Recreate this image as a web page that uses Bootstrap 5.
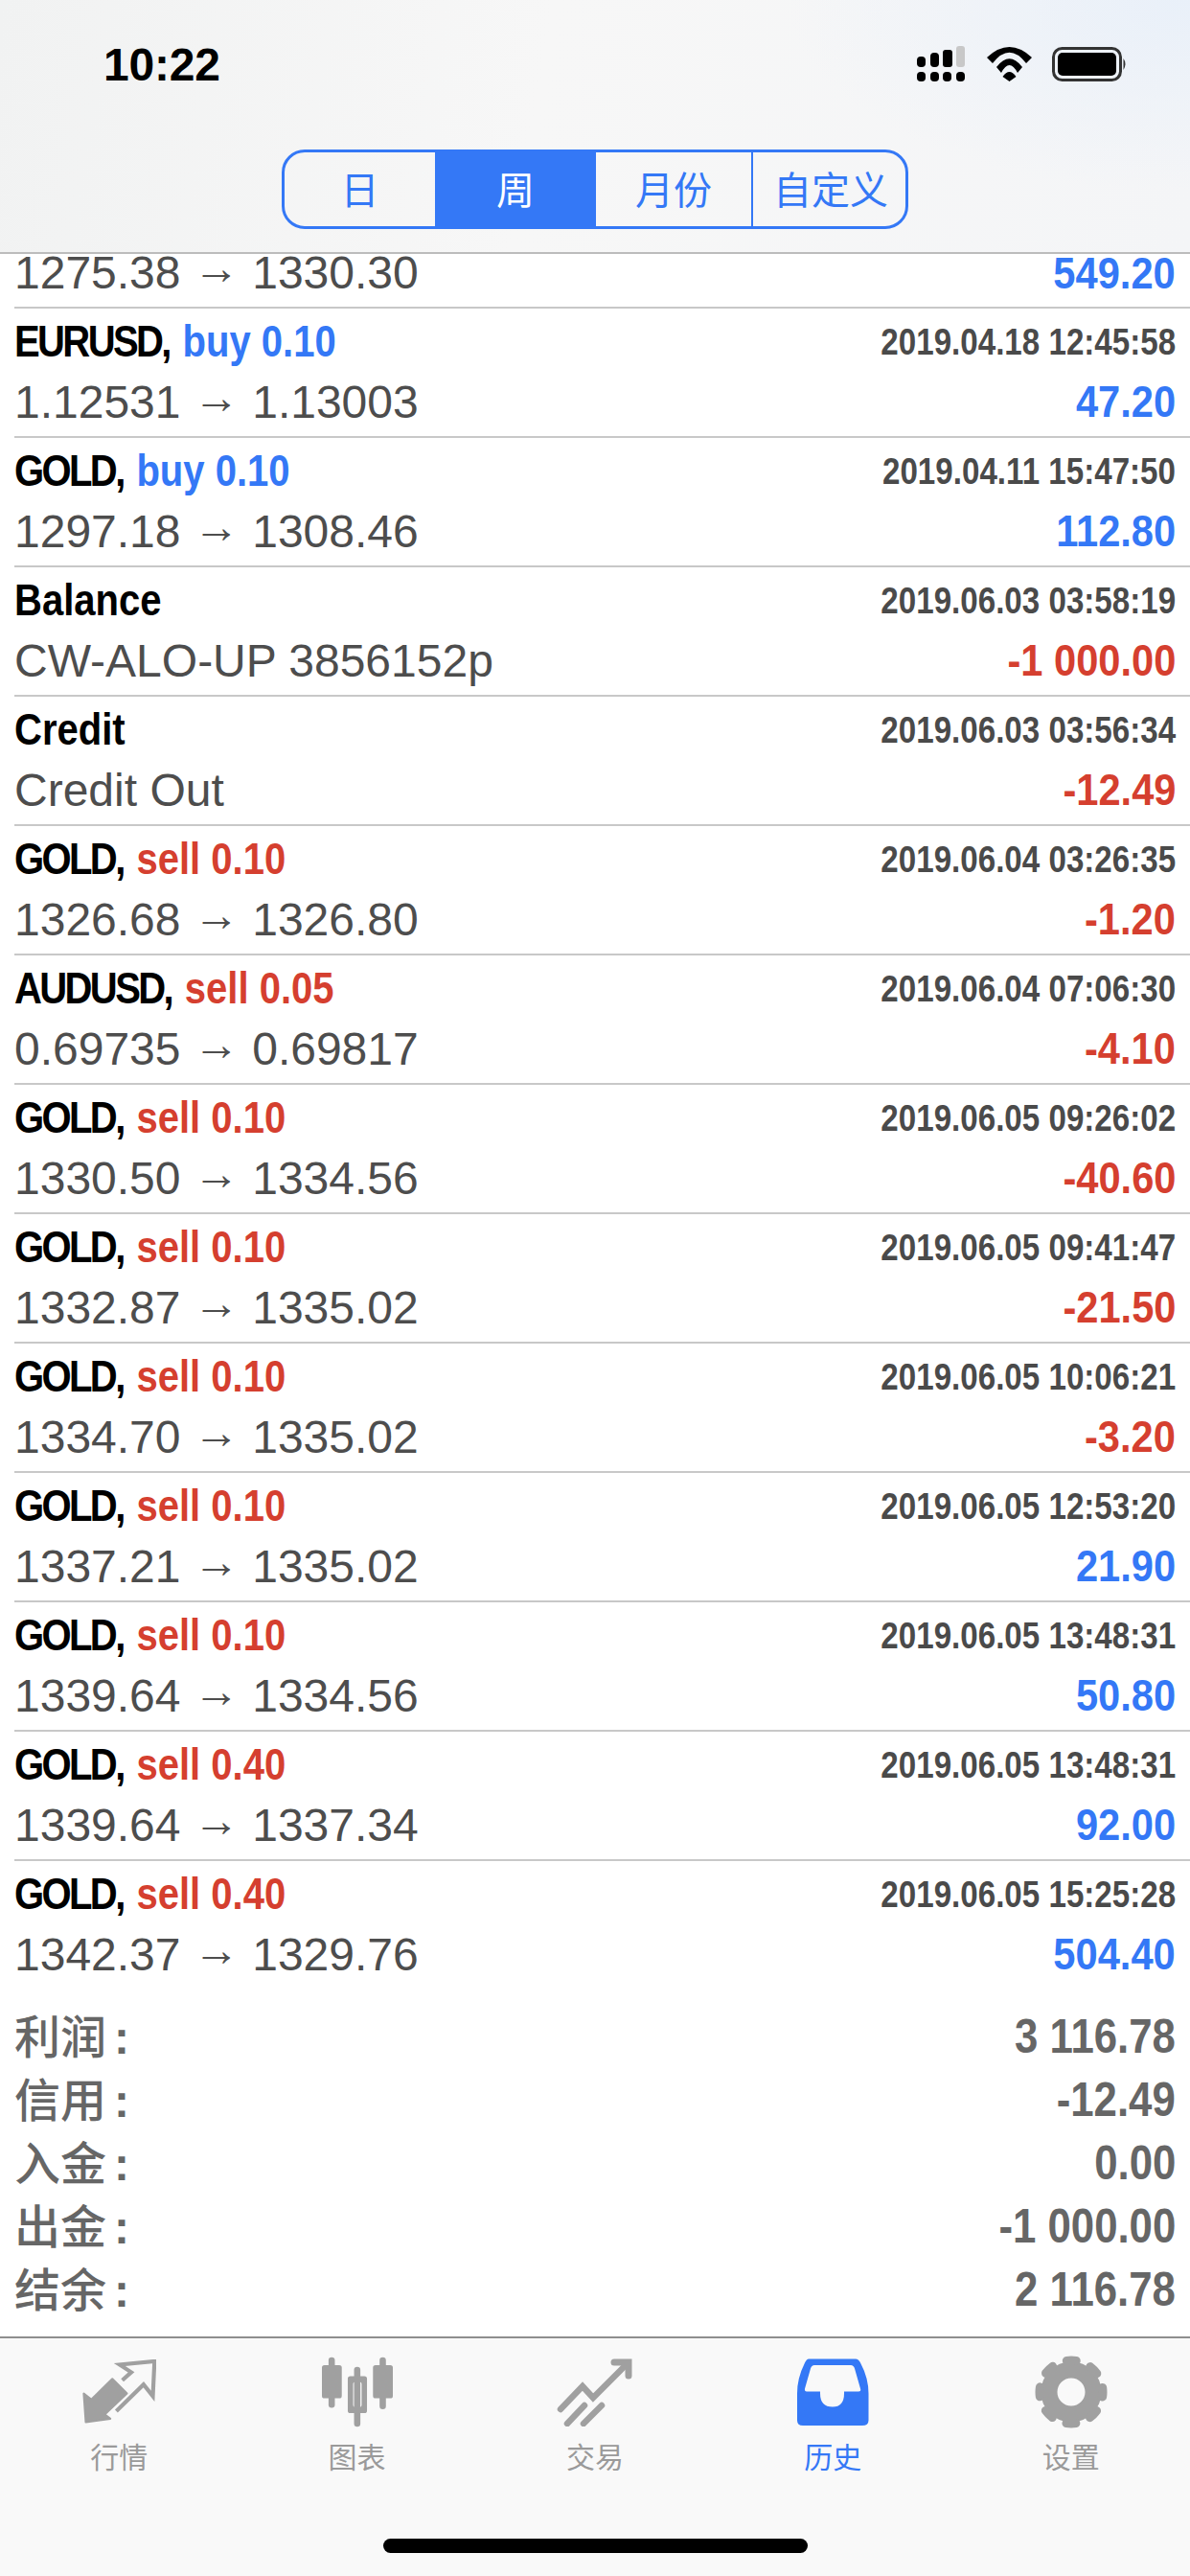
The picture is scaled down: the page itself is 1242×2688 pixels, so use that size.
<!DOCTYPE html>
<html lang="zh">
<head>
<meta charset="utf-8">
<title>历史</title>
<link href="https://cdn.jsdelivr.net/npm/bootstrap@5.3.0/dist/css/bootstrap.min.css" rel="stylesheet">
<style>
html,body{margin:0;background:#fff}
body{width:1242px;height:2688px;overflow:hidden;font-family:"Liberation Sans","Noto Sans CJK SC",sans-serif}
.phone{height:2688px}
.top-area{height:265px;border-bottom:2px solid #bcbcbc;background:radial-gradient(ellipse 420px 200px at 100% 0,#e9f0f9 0,rgba(233,240,249,0) 100%),linear-gradient(100deg,#f1f2f2 0,#f7f7f7 45%,#f4f5f7 100%)}
.status-line{height:156px;padding:44px 65px 0 108px}
.clock{font-size:48px;font-weight:700;line-height:48px;color:#000;letter-spacing:-.2px}
.seg{width:654px;height:83px;border:3px solid #3478f6;border-radius:24px;overflow:hidden}
.seg-item{font-size:40px;line-height:75px;color:#3478f6;text-align:center;font-family:"Noto Sans CJK SC",sans-serif}
.seg-item.on{background:#3478f6;color:#fff}
.seg-a{width:157px}.seg-b{width:168px}.seg-c{width:164px;border-right:2px solid #3478f6}.seg-d{flex:1;padding-left:3px}
.tx-list{flex:1}
.tx-list .list-group-item{margin-left:15px;padding:3px 15px 5px 0;border:0;border-bottom:2px solid #c8c8c8;height:135px;border-radius:0;background:transparent}
.tx-list .list-group-item.cut{height:57px;padding-top:0}
.tx-line{height:63px;line-height:63px;white-space:nowrap}
.cut .tx-line{height:40px;line-height:40px}
.ttl{display:inline-block;font-weight:700;font-size:46px;color:#000;transform:scaleX(.87);transform-origin:0 50%}
.sym{letter-spacing:-3px;margin-right:3px}
.stamp{display:inline-block;font-weight:700;font-size:39px;color:#4a4a4a;transform:scaleX(.85);transform-origin:100% 50%}
.px{font-size:48px;color:#4d4d4d}
.arw{vertical-align:5px;line-height:0}
.amt{display:inline-block;font-weight:700;font-size:46px;transform:scaleX(.905);transform-origin:100% 50%}
.up{color:#3478f6}.dn{color:#d53f2f}
.sum-box{padding:15px 15px 15px 15px;color:#666}
.sum-line{height:66px;line-height:66px}
.sum-key{font-size:48px;line-height:60px;font-weight:500;font-family:"Noto Sans CJK SC",sans-serif}
.sum-col{font-family:"Liberation Sans",sans-serif;font-weight:700;margin-left:8px}
.sum-val{display:inline-block;font-weight:700;font-size:50px;transform:scaleX(.875);transform-origin:100% 50%}
.tabs{height:250px;background:#f9f9f9;border-top:2px solid #8e8e8e;position:relative}
.tab-cell{width:20%;margin-top:18px;color:#9a9a9a;font-size:30px;line-height:36px;font-family:"Noto Sans CJK SC",sans-serif}
.tab-cell.on{color:#3478f6}
.tab-ico{height:76px;margin-bottom:10px;flex-shrink:0}
.tab-ico svg{display:block}
.home-bar{position:absolute;left:400px;top:209px;width:443px;height:15px;border-radius:8px;background:#000}
</style>
</head>
<body>
<div class="phone d-flex flex-column">
  <header class="top-area">
    <div class="status-line d-flex justify-content-between align-items-start">
      <div class="clock">10:22</div>
      <div class="d-flex align-items-start mt-1">
        <svg width="52" height="38" viewBox="0 0 52 38" style="margin-right:21px">
          <g fill="#000"><rect x="0" y="11" width="9" height="11" rx="4"/><rect x="14" y="7" width="9" height="15" rx="4"/><rect x="27" y="4" width="10" height="18" rx="3"/></g>
          <rect x="41" y="0" width="9" height="22" rx="3" fill="#c8c8c8"/>
          <g fill="#000"><rect x="0" y="27" width="9" height="10" rx="4"/><rect x="14" y="27" width="9" height="10" rx="4"/><rect x="27" y="27" width="9" height="10" rx="4"/><rect x="41" y="27" width="9" height="10" rx="4"/></g>
        </svg>
        <svg width="47" height="37" viewBox="0 0 47 37" style="margin:1px 21px 0 0">
          <path d="M0 11Q23.5-11 47 11L41 17Q23.5-5.500 6 17Z M10 21Q23.5 3.500 37 21L32 27Q23.500 11 15 27Z M16.500 31Q23.500 21 30.500 31L23.500 36Z" fill="#000"/>
        </svg>
        <svg width="79" height="37" viewBox="0 0 79 37" style="margin-top:1px">
          <rect x="1.500" y="1.500" width="70" height="33" rx="9" fill="none" stroke="#333" stroke-width="3"/>
          <rect x="6" y="6" width="61" height="24" rx="5" fill="#000"/>
          <path d="M74.500 12Q78.500 17.500 74.500 24Z" fill="#333"/>
        </svg>
      </div>
    </div>
    <div class="d-flex justify-content-center">
      <div class="seg d-flex" role="group">
        <div class="seg-item seg-a">日</div>
        <div class="seg-item seg-b on">周</div>
        <div class="seg-item seg-c">月份</div>
        <div class="seg-item seg-d">自定义</div>
      </div>
    </div>
  </header>

  <main class="tx-list">
    <ul class="list-group list-group-flush">
      <li class="list-group-item cut"><div class="tx-line d-flex justify-content-between"><span class="px">1275.38 <span class="arw">→</span> 1330.30</span><span class="amt up">549.20</span></div></li>
      <li class="list-group-item"><div class="tx-line d-flex justify-content-between"><span class="ttl"><span class="sym">EURUSD,</span> <span class="up">buy 0.10</span></span><span class="stamp">2019.04.18 12:45:58</span></div><div class="tx-line d-flex justify-content-between"><span class="px">1.12531 <span class="arw">→</span> 1.13003</span><span class="amt up">47.20</span></div></li>
      <li class="list-group-item"><div class="tx-line d-flex justify-content-between"><span class="ttl"><span class="sym">GOLD,</span> <span class="up">buy 0.10</span></span><span class="stamp">2019.04.11 15:47:50</span></div><div class="tx-line d-flex justify-content-between"><span class="px">1297.18 <span class="arw">→</span> 1308.46</span><span class="amt up">112.80</span></div></li>
      <li class="list-group-item"><div class="tx-line d-flex justify-content-between"><span class="ttl">Balance</span><span class="stamp">2019.06.03 03:58:19</span></div><div class="tx-line d-flex justify-content-between"><span class="px">CW-ALO-UP 3856152p</span><span class="amt dn">-1 000.00</span></div></li>
      <li class="list-group-item"><div class="tx-line d-flex justify-content-between"><span class="ttl">Credit</span><span class="stamp">2019.06.03 03:56:34</span></div><div class="tx-line d-flex justify-content-between"><span class="px">Credit Out</span><span class="amt dn">-12.49</span></div></li>
      <li class="list-group-item"><div class="tx-line d-flex justify-content-between"><span class="ttl"><span class="sym">GOLD,</span> <span class="dn">sell 0.10</span></span><span class="stamp">2019.06.04 03:26:35</span></div><div class="tx-line d-flex justify-content-between"><span class="px">1326.68 <span class="arw">→</span> 1326.80</span><span class="amt dn">-1.20</span></div></li>
      <li class="list-group-item"><div class="tx-line d-flex justify-content-between"><span class="ttl"><span class="sym">AUDUSD,</span> <span class="dn">sell 0.05</span></span><span class="stamp">2019.06.04 07:06:30</span></div><div class="tx-line d-flex justify-content-between"><span class="px">0.69735 <span class="arw">→</span> 0.69817</span><span class="amt dn">-4.10</span></div></li>
      <li class="list-group-item"><div class="tx-line d-flex justify-content-between"><span class="ttl"><span class="sym">GOLD,</span> <span class="dn">sell 0.10</span></span><span class="stamp">2019.06.05 09:26:02</span></div><div class="tx-line d-flex justify-content-between"><span class="px">1330.50 <span class="arw">→</span> 1334.56</span><span class="amt dn">-40.60</span></div></li>
      <li class="list-group-item"><div class="tx-line d-flex justify-content-between"><span class="ttl"><span class="sym">GOLD,</span> <span class="dn">sell 0.10</span></span><span class="stamp">2019.06.05 09:41:47</span></div><div class="tx-line d-flex justify-content-between"><span class="px">1332.87 <span class="arw">→</span> 1335.02</span><span class="amt dn">-21.50</span></div></li>
      <li class="list-group-item"><div class="tx-line d-flex justify-content-between"><span class="ttl"><span class="sym">GOLD,</span> <span class="dn">sell 0.10</span></span><span class="stamp">2019.06.05 10:06:21</span></div><div class="tx-line d-flex justify-content-between"><span class="px">1334.70 <span class="arw">→</span> 1335.02</span><span class="amt dn">-3.20</span></div></li>
      <li class="list-group-item"><div class="tx-line d-flex justify-content-between"><span class="ttl"><span class="sym">GOLD,</span> <span class="dn">sell 0.10</span></span><span class="stamp">2019.06.05 12:53:20</span></div><div class="tx-line d-flex justify-content-between"><span class="px">1337.21 <span class="arw">→</span> 1335.02</span><span class="amt up">21.90</span></div></li>
      <li class="list-group-item"><div class="tx-line d-flex justify-content-between"><span class="ttl"><span class="sym">GOLD,</span> <span class="dn">sell 0.10</span></span><span class="stamp">2019.06.05 13:48:31</span></div><div class="tx-line d-flex justify-content-between"><span class="px">1339.64 <span class="arw">→</span> 1334.56</span><span class="amt up">50.80</span></div></li>
      <li class="list-group-item"><div class="tx-line d-flex justify-content-between"><span class="ttl"><span class="sym">GOLD,</span> <span class="dn">sell 0.40</span></span><span class="stamp">2019.06.05 13:48:31</span></div><div class="tx-line d-flex justify-content-between"><span class="px">1339.64 <span class="arw">→</span> 1337.34</span><span class="amt up">92.00</span></div></li>
      <li class="list-group-item"><div class="tx-line d-flex justify-content-between"><span class="ttl"><span class="sym">GOLD,</span> <span class="dn">sell 0.40</span></span><span class="stamp">2019.06.05 15:25:28</span></div><div class="tx-line d-flex justify-content-between"><span class="px">1342.37 <span class="arw">→</span> 1329.76</span><span class="amt up">504.40</span></div></li>
    </ul>
    <section class="sum-box">
      <div class="sum-line d-flex justify-content-between"><span class="sum-key">利润<span class="sum-col">:</span></span><span class="sum-val">3 116.78</span></div>
      <div class="sum-line d-flex justify-content-between"><span class="sum-key">信用<span class="sum-col">:</span></span><span class="sum-val">-12.49</span></div>
      <div class="sum-line d-flex justify-content-between"><span class="sum-key">入金<span class="sum-col">:</span></span><span class="sum-val">0.00</span></div>
      <div class="sum-line d-flex justify-content-between"><span class="sum-key">出金<span class="sum-col">:</span></span><span class="sum-val">-1 000.00</span></div>
      <div class="sum-line d-flex justify-content-between"><span class="sum-key">结余<span class="sum-col">:</span></span><span class="sum-val">2 116.78</span></div>
    </section>
  </main>

  <nav class="tabs d-flex flex-shrink-0">
    <div class="tab-cell d-flex flex-column align-items-center">
      <div class="tab-ico d-flex align-items-center"><svg width="78" height="68" viewBox="135 70 225 195" fill="#a0a0a0">
        <path d="M142 172L148 258L222 248L205 235L272 172L228 128L165 190Z" stroke="#a0a0a0" stroke-width="6" stroke-linejoin="round"/>
        <path d="M240 225L322 145L350 180L355 75L250 85L285 108L258 132" fill="none" stroke="#a0a0a0" stroke-width="12"/>
      </svg></div><div>行情</div>
    </div>
    <div class="tab-cell d-flex flex-column align-items-center">
      <div class="tab-ico d-flex align-items-center"><svg width="76" height="74" viewBox="882 53 231 224" fill="#a0a0a0">
        <rect x="906" y="55" width="20" height="160" rx="10"/><rect x="885" y="80" width="63" height="105" rx="8"/>
        <rect x="1068" y="55" width="20" height="165" rx="10"/><rect x="1047" y="80" width="63" height="105" rx="8"/>
        <rect x="987" y="85" width="20" height="190" rx="10"/>
        <path fill-rule="evenodd" d="M975 115H1020Q1028 115 1028 123V224Q1028 232 1020 232H975Q967 232 967 224V123Q967 115 975 115ZM990 133Q984 133 984 139V207Q984 213 990 213H1005Q1011 213 1011 207V139Q1011 133 1005 133Z"/>
      </svg></div><div>图表</div>
    </div>
    <div class="tab-cell d-flex flex-column align-items-center">
      <div class="tab-ico d-flex align-items-center"><svg width="80" height="72" viewBox="40 18 80 72" fill="none" stroke="#a0a0a0" stroke-width="6.500" stroke-linecap="round" stroke-linejoin="miter">
        <path d="M44 72L67 48L78 60L113 25"/>
        <path d="M100 23H115V37" stroke-width="7"/>
        <path d="M51 87L69 68M68 87L87 68"/>
      </svg></div><div>交易</div>
    </div>
    <div class="tab-cell on d-flex flex-column align-items-center">
      <div class="tab-ico d-flex align-items-center"><svg width="75" height="70" viewBox="290 20.500 75 70">
        <path fill="#3478f6" fill-rule="evenodd" d="M302 21H351Q354 21 356 25Q364.500 41 364.500 57V85Q364.500 90.500 358 90.500H296Q290 90.500 290 85V57Q290 41 298 25Q300 21 302 21ZM308 27.500Q305 27.500 304 31L298 52Q297.500 55 300 55H314V57Q314 71 327 71Q339 71 339 57V55H354Q357 55 356 52L350 31Q349 27.500 346 27.500Z"/>
      </svg></div><div>历史</div>
    </div>
    <div class="tab-cell d-flex flex-column align-items-center">
      <div class="tab-ico d-flex align-items-center"><svg width="76" height="76" viewBox="-38 -38 76 76" fill="none" stroke="#a0a0a0">
        <circle r="23" stroke-width="17"/>
        <circle r="33" stroke-width="9" stroke-dasharray="10 15.920" stroke-dashoffset="5" stroke-linecap="round"/>
      </svg></div><div>设置</div>
    </div>
    <div class="home-bar"></div>
  </nav>
</div>
<script src="https://cdn.jsdelivr.net/npm/bootstrap@5.3.0/dist/js/bootstrap.bundle.min.js"></script>
</body>
</html>
